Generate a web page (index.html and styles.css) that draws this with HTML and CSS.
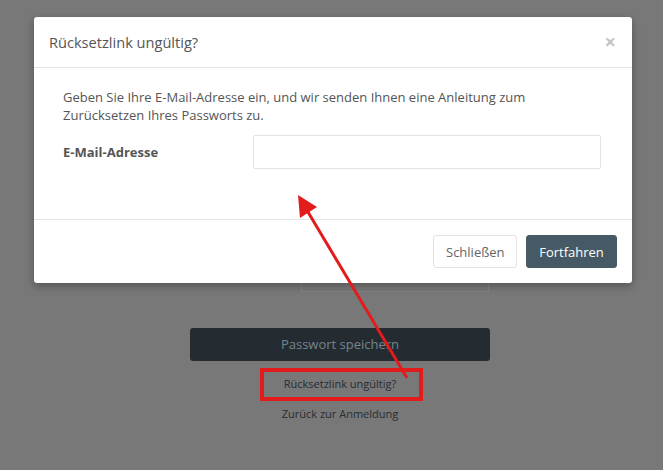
FILE: index.html
```html
<!DOCTYPE html>
<html lang="de">
<head>
<meta charset="utf-8">
<title>Rücksetzlink ungültig?</title>
<link rel="stylesheet" href="styles.css">
</head>
<body>
<div class="page">
  <div class="bg-field"></div>
  <div class="bg-button">Passwort speichern</div>
  <div class="bg-link boxed">Rücksetzlink ungültig?</div>
  <div class="bg-link">Zurück zur Anmeldung</div>
</div>

<div class="modal">
  <div class="modal-header">
    <h4 class="modal-title">Rücksetzlink ungültig?</h4>
    <span class="close">×</span>
  </div>
  <div class="modal-body">
    <p class="intro">Geben Sie Ihre E-Mail-Adresse ein, und wir senden Ihnen eine Anleitung zum Zurücksetzen Ihres Passworts zu.</p>
    <div class="form-row">
      <label class="label">E-Mail-Adresse</label>
      <input class="input" type="text">
    </div>
  </div>
  <div class="modal-footer">
    <button class="btn btn-default">Schließen</button>
    <button class="btn btn-primary">Fortfahren</button>
  </div>
</div>

<svg class="annotation" width="663" height="470" viewBox="0 0 663 470">
  <rect x="262" y="370" width="159" height="29" fill="none" stroke="#e21b1b" stroke-width="4"/>
  <line x1="407" y1="378" x2="305" y2="207" stroke="#e21b1b" stroke-width="3"/>
  <polygon points="298,195 300,218 317,207" fill="#e21b1b"/>
</svg>
</body>
</html>
```
FILE: styles.css
```css
html, body {
  margin: 0;
  padding: 0;
}
body {
  width: 663px;
  height: 470px;
  background: #787878;
  font-family: "Open Sans", "DejaVu Sans", sans-serif;
  position: relative;
  overflow: hidden;
}
.page {
  display: flex;
  flex-direction: column;
  align-items: center;
  padding-left: 17px;
}
.bg-field {
  width: 188px;
  height: 252px;
  margin-top: 40px;
  margin-left: 110px;
  border: 1px solid #838383;
  box-sizing: border-box;
}
.bg-button {
  margin-top: 36px;
  width: 300px;
  height: 33px;
  background: #242c32;
  border-radius: 3px;
  color: #76848b;
  font-size: 13px;
  line-height: 33px;
  text-align: center;
}
.bg-link {
  font-size: 11px;
  color: #272d31;
  line-height: 16px;
}
.bg-link.boxed {
  margin-top: 15px;
}
.bg-link + .bg-link {
  margin-top: 14px;
}

.modal {
  position: absolute;
  left: 34px;
  top: 17px;
  width: 598px;
  background: #fff;
  border-radius: 3px;
  box-shadow: 0 3px 8px rgba(0,0,0,0.3);
}
.modal-header {
  display: flex;
  align-items: center;
  justify-content: space-between;
  height: 50px;
  padding: 0 16px 0 15px;
  border-bottom: 1px solid #e5e5e5;
}
.modal-title {
  margin: 0;
  font-size: 14.6px;
  font-weight: 400;
  color: #555;
}
.close {
  font-size: 20px;
  font-weight: 700;
  color: #c4c4c4;
  line-height: 1;
}
.modal-body {
  padding: 20px 31px 50px 29px;
  border-bottom: 1px solid #e5e5e5;
}
.intro {
  margin: 0 0 11px;
  font-size: 13px;
  line-height: 18px;
  color: #555;
}
.form-row {
  display: flex;
  align-items: center;
}
.label {
  width: 190px;
  font-size: 13px;
  font-weight: 700;
  color: #555;
}
.input {
  flex: 1;
  height: 34px;
  box-sizing: border-box;
  border: 1px solid #e3e3e3;
  border-radius: 2px;
  margin: 0;
}
.modal-footer {
  display: flex;
  justify-content: flex-end;
  gap: 9px;
  padding: 15px 15px 15px;
}
.btn {
  height: 33px;
  padding: 0 12px;
  font-family: "Open Sans", "DejaVu Sans", sans-serif;
  font-size: 13px;
  border-radius: 3px;
  cursor: pointer;
}
.btn-default {
  width: 84px;
  background: #fff;
  border: 1px solid #e2e2e2;
  color: #666;
}
.btn-primary {
  width: 91px;
  background: #455a64;
  border: 1px solid #455a64;
  color: #fff;
}
.annotation {
  position: absolute;
  left: 0;
  top: 0;
}
```
